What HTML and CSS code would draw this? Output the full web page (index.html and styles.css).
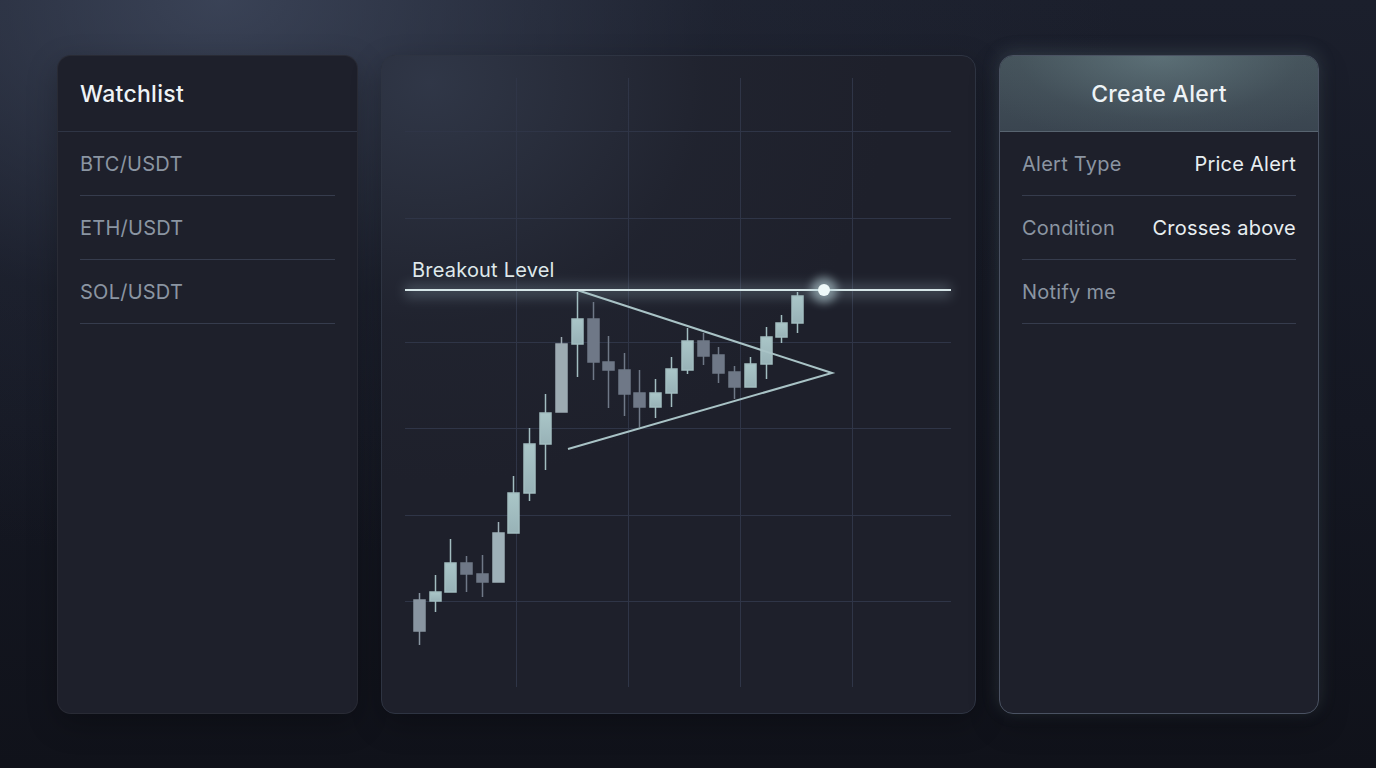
FILE: index.html
```html
<!DOCTYPE html>
<html lang="en">
<head>
<meta charset="utf-8">
<title>Alert</title>
<link rel="stylesheet" href="styles.css">
</head>
<body>
<main class="layout">
  <section class="panel watchlist">
    <header class="panel-head">Watchlist</header>
    <ul class="list">
      <li class="list-row">BTC/USDT</li>
      <li class="list-row">ETH/USDT</li>
      <li class="list-row">SOL/USDT</li>
    </ul>
  </section>

  <section class="panel chart">
    <svg class="chart-svg" width="593" height="657" viewBox="382 56 593 657" xmlns="http://www.w3.org/2000/svg">
      <defs>
        <filter id="blur6" x="-20%" y="-200%" width="140%" height="500%"><feGaussianBlur stdDeviation="6"/></filter>
        <filter id="blur4" x="-100%" y="-100%" width="300%" height="300%"><feGaussianBlur stdDeviation="4"/></filter>
        <linearGradient id="lightc" x1="0" y1="0" x2="0" y2="1">
          <stop offset="0" stop-color="#aac6c8"/>
          <stop offset="1" stop-color="#98b2b7"/>
        </linearGradient>
      </defs>
      <g class="grid" stroke="#2f3547" stroke-width="1">
        <line x1="516.5" y1="78" x2="516.5" y2="687"/>
        <line x1="628.5" y1="78" x2="628.5" y2="687"/>
        <line x1="740.5" y1="78" x2="740.5" y2="687"/>
        <line x1="852.5" y1="78" x2="852.5" y2="687"/>
        <line x1="405" y1="131.5" x2="951" y2="131.5"/>
        <line x1="405" y1="218.5" x2="951" y2="218.5"/>
        <line x1="405" y1="342.5" x2="951" y2="342.5"/>
        <line x1="405" y1="428.5" x2="951" y2="428.5"/>
        <line x1="405" y1="515.5" x2="951" y2="515.5"/>
        <line x1="405" y1="601.5" x2="951" y2="601.5"/>
      </g>

      <rect x="405" y="284" width="546" height="14" fill="#9fb6c2" opacity="0.25" filter="url(#blur6)"/>

      <g class="candles" stroke-width="1.5">
        <g stroke="#8995a1" fill="#8995a1"><line x1="419.5" y1="593" x2="419.5" y2="645"/><rect x="414" y="600" width="11" height="31"/></g>
        <g stroke="#a2bdc0" fill="url(#lightc)"><line x1="435.5" y1="575" x2="435.5" y2="612"/><rect x="430" y="592" width="11" height="9"/></g>
        <g stroke="#a2bdc0" fill="url(#lightc)"><line x1="450.5" y1="539" x2="450.5" y2="592"/><rect x="445" y="563" width="11" height="29"/></g>
        <g stroke="#6f7887" fill="#6f7887"><line x1="466.5" y1="556" x2="466.5" y2="592"/><rect x="461" y="563" width="11" height="11"/></g>
        <g stroke="#6f7887" fill="#6f7887"><line x1="482.5" y1="555" x2="482.5" y2="597"/><rect x="477" y="574" width="11" height="8"/></g>
        <g stroke="#9eb0b8" fill="#9eb0b8"><line x1="498.5" y1="522" x2="498.5" y2="582"/><rect x="493" y="533" width="11" height="49"/></g>
        <g stroke="#a2bdc0" fill="url(#lightc)"><line x1="513.5" y1="476" x2="513.5" y2="533"/><rect x="508" y="493" width="11" height="40"/></g>
        <g stroke="#a2bdc0" fill="url(#lightc)"><line x1="529.5" y1="428" x2="529.5" y2="501"/><rect x="524" y="444" width="11" height="49"/></g>
        <g stroke="#a2bdc0" fill="url(#lightc)"><line x1="545.5" y1="394" x2="545.5" y2="470"/><rect x="540" y="413" width="11" height="31"/></g>
        <g stroke="#9dabb2" fill="#9dabb2"><line x1="561.5" y1="337" x2="561.5" y2="412"/><rect x="556" y="344" width="11" height="68"/></g>
        <g stroke="#a2bdc0" fill="url(#lightc)"><line x1="577.5" y1="292" x2="577.5" y2="377"/><rect x="572" y="319" width="11" height="25"/></g>
        <g stroke="#6f7887" fill="#6f7887"><line x1="593.5" y1="302" x2="593.5" y2="380"/><rect x="588" y="319" width="11" height="43"/></g>
        <g stroke="#6f7887" fill="#6f7887"><line x1="608.5" y1="336" x2="608.5" y2="408"/><rect x="603" y="362" width="11" height="8"/></g>
        <g stroke="#6f7887" fill="#6f7887"><line x1="624.5" y1="353" x2="624.5" y2="416"/><rect x="619" y="370" width="11" height="24"/></g>
        <g stroke="#6f7887" fill="#6f7887"><line x1="639.5" y1="370" x2="639.5" y2="427"/><rect x="634" y="393" width="11" height="14"/></g>
        <g stroke="#a2bdc0" fill="url(#lightc)"><line x1="655.5" y1="379" x2="655.5" y2="418"/><rect x="650" y="393" width="11" height="14"/></g>
        <g stroke="#a2bdc0" fill="url(#lightc)"><line x1="671.5" y1="357" x2="671.5" y2="407"/><rect x="666" y="369" width="11" height="24"/></g>
        <g stroke="#a2bdc0" fill="url(#lightc)"><line x1="687.5" y1="328" x2="687.5" y2="374"/><rect x="682" y="341" width="11" height="29"/></g>
        <g stroke="#6f7887" fill="#6f7887"><line x1="703.5" y1="333" x2="703.5" y2="365"/><rect x="698" y="341" width="11" height="15"/></g>
        <g stroke="#6f7887" fill="#6f7887"><line x1="718.5" y1="347" x2="718.5" y2="383"/><rect x="713" y="355" width="11" height="18"/></g>
        <g stroke="#6f7887" fill="#6f7887"><line x1="734.5" y1="366" x2="734.5" y2="399"/><rect x="729" y="372" width="11" height="15"/></g>
        <g stroke="#a2bdc0" fill="url(#lightc)"><line x1="750.5" y1="357" x2="750.5" y2="387"/><rect x="745" y="364" width="11" height="23"/></g>
        <g stroke="#a2bdc0" fill="url(#lightc)"><line x1="766.5" y1="327" x2="766.5" y2="379"/><rect x="761" y="337" width="11" height="27"/></g>
        <g stroke="#a2bdc0" fill="url(#lightc)"><line x1="781.5" y1="315" x2="781.5" y2="343"/><rect x="776" y="323" width="11" height="14"/></g>
        <g stroke="#a2bdc0" fill="url(#lightc)"><line x1="797.5" y1="292" x2="797.5" y2="333"/><rect x="792" y="296" width="11" height="27"/></g>
      </g>

      <polyline points="577,290 832,373 568,449" fill="none" stroke="#a9c3c6" stroke-width="2" stroke-linejoin="miter"/>

      <line x1="405" y1="290" x2="951" y2="290" stroke="#d6e6e8" stroke-width="2"/>
      <text class="chart-label" x="412" y="277">Breakout Level</text>

      <circle cx="824" cy="290" r="13" fill="#bcd6dc" opacity="0.55" filter="url(#blur4)"/>
      <circle cx="824" cy="290" r="6" fill="#eef8f8"/>
    </svg>
  </section>

  <section class="panel alert">
    <header class="panel-head alert-head">Create Alert</header>
    <ul class="list">
      <li class="list-row"><span class="label">Alert Type</span><span class="value">Price Alert</span></li>
      <li class="list-row"><span class="label">Condition</span><span class="value">Crosses above</span></li>
      <li class="list-row"><span class="label">Notify me</span></li>
    </ul>
  </section>
</main>
</body>
</html>
```

FILE: styles.css
```css
* { box-sizing: border-box; }

html, body {
  margin: 0;
  width: 1376px;
  height: 768px;
  overflow: hidden;
}

body {
  font-family: Inter, "Noto Sans", "Liberation Sans", sans-serif;
  background:
    radial-gradient(ellipse 900px 560px at 16% 0%, rgba(68, 78, 100, 0.75), rgba(40, 46, 62, 0.3) 55%, rgba(20, 22, 30, 0) 100%),
    linear-gradient(180deg, #1b1f2c 0%, #151823 55%, #10121a 100%);
}

.layout {
  display: flex;
  gap: 23px;
  padding: 55px 0 0 57px;
}

.panel {
  height: 659px;
  border-radius: 14px;
  background: #1e202b;
  border: 1px solid rgba(255, 255, 255, 0.05);
  overflow: hidden;
}

.watchlist {
  width: 301px;
  box-shadow: 0 10px 30px rgba(0, 0, 0, 0.25);
}

.chart {
  width: 595px;
  border-color: #2e3442;
  background:
    radial-gradient(ellipse 460px 400px at 8% 4%, rgba(60, 70, 90, 0.6), rgba(40, 46, 60, 0.22) 60%, rgba(30, 32, 43, 0) 100%),
    #1e202b;
  box-shadow: 0 10px 30px rgba(0, 0, 0, 0.25);
}

.chart-svg {
  display: block;
}

.chart-label {
  font-family: Inter, "Noto Sans", sans-serif;
  font-size: 20px;
  letter-spacing: 0.2px;
  fill: #dfe8ea;
}

.alert {
  width: 320px;
  border-color: #4a5262;
  box-shadow: 0 -3px 18px rgba(150, 185, 195, 0.18), 0 10px 30px rgba(0, 0, 0, 0.25);
}

.panel-head {
  height: 76px;
  display: flex;
  align-items: center;
  padding: 0 22px;
  font-size: 23px;
  font-weight: 500;
  letter-spacing: 0.3px;
  color: #eef3f6;
  border-bottom: 1px solid #2f3545;
}

.alert-head {
  justify-content: center;
  border-bottom-color: #586470;
  background:
    radial-gradient(ellipse 200px 90px at 50% 0%, rgba(115, 140, 146, 0.5), rgba(80, 96, 104, 0.2) 70%, rgba(60, 70, 80, 0) 100%),
    linear-gradient(180deg, #44525a 0%, #3a4550 100%);
}

.list {
  list-style: none;
  margin: 0;
  padding: 0 22px;
}

.list-row {
  height: 64px;
  display: flex;
  align-items: center;
  justify-content: space-between;
  border-bottom: 1px solid #363c4d;
  font-size: 20px;
  letter-spacing: 0.25px;
  color: #8b95a2;
}

.value {
  color: #e8eef1;
}
```
